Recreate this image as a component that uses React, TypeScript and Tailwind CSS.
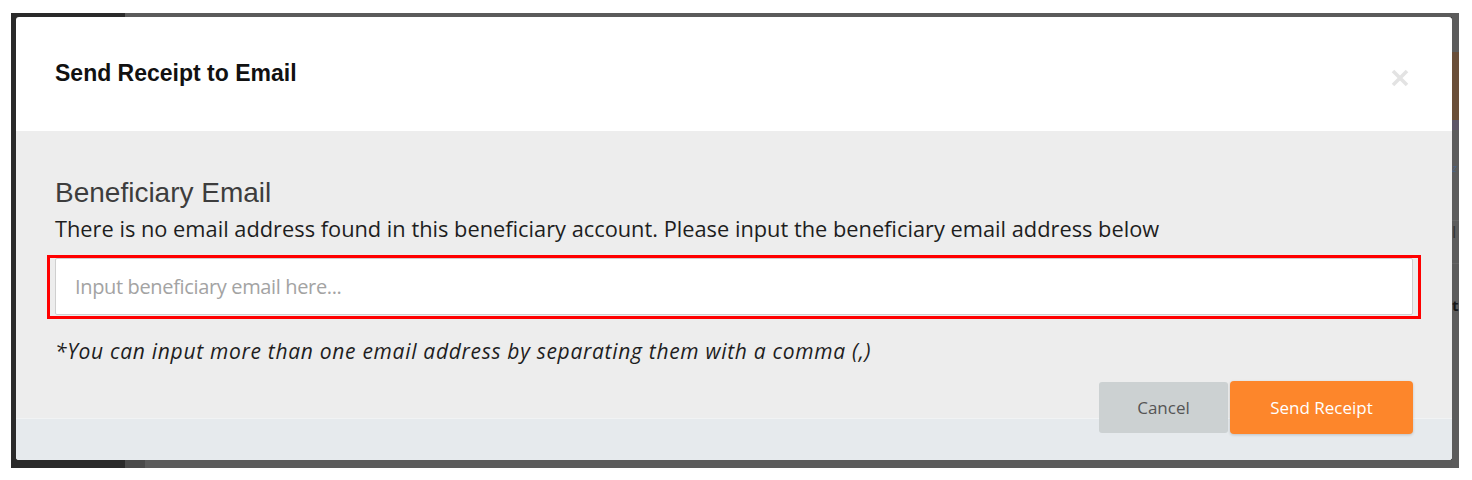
import type { ReactElement } from 'react';

// Send-receipt modal, photographed over a dimmed page (the dark frame round it).

function CloseIcon(): ReactElement {
  return (
    <svg width="18" height="18" viewBox="0 0 18 18" aria-hidden="true">
      <path d="M2 2 L16 16 M16 2 L2 16" stroke="#e3e3e3" strokeWidth="3.6" strokeLinecap="butt" />
    </svg>
  );
}

// The sliver of the page behind the backdrop that shows on the right of the modal.
function RightSliver(): ReactElement {
  return (
    <div className="flex w-[7px] shrink-0 flex-col overflow-hidden bg-[#5c5c5c]">
      <div className="h-[39px] shrink-0" />
      <div className="h-[68px] shrink-0 bg-[#6a4f39]" />
      <div className="h-[10px] shrink-0 bg-[#5d5667]" />
      <div className="h-[30px] shrink-0" />
      <div className="h-[16px] shrink-0 font-['Open_Sans'] text-[11px] leading-[16px] italic text-[#4b6384]">
        z
      </div>
      <div className="h-[44px] shrink-0" />
      <div className="h-px shrink-0 bg-[#666]" />
      <div className="h-[22px] shrink-0 font-['Open_Sans'] text-[17px] leading-[22px] text-[#333]">
        l
      </div>
      <div className="h-[20px] shrink-0" />
      <div className="h-px shrink-0 bg-[#666]" />
      <div className="h-[30px] shrink-0" />
      <div className="h-[22px] shrink-0 font-['Open_Sans'] text-[15px] font-bold leading-[22px] text-[#151515]">
        t
      </div>
    </div>
  );
}

export default function App(): ReactElement {
  return (
    <div className="h-[480px] w-[1472px] bg-white pt-[13px] pl-[11px]">
      <div className="flex h-[455px] w-[1448px] bg-[#2a2a2a]">
        <div className="w-[5px] shrink-0 bg-[#2a2a2a]" />
        <div className="flex w-[1436px] shrink-0 flex-col">
          <div className="h-[4px] shrink-0 bg-[linear-gradient(to_right,#2a2a2a_0_109px,#5b5b5b_109px)]" />
          <div className="flex h-[443px] shrink-0 flex-col overflow-hidden rounded-[3px] bg-white">
            <div className="flex h-[114px] shrink-0 items-start justify-between pt-[45px] pr-[43px] pl-[39px]">
              <h1 className="font-['Liberation_Sans',Arial,sans-serif] text-[23px] leading-[23px] font-bold text-[#111]">
                Send Receipt to Email
              </h1>
              <button type="button" aria-label="Close" className="mt-[7px] flex h-[18px] w-[18px]">
                <CloseIcon />
              </button>
            </div>

            <div className="flex flex-1 flex-col px-[39px] pt-[48px] bg-[linear-gradient(to_bottom,#ededed_0_287px,#f1f3f4_287px_288px,#e6eaed_288px)]">
              <h2 className="font-['Liberation_Sans',Arial,sans-serif] text-[28px] leading-[28px] text-[#3d3d3d]">
                Beneficiary Email
              </h2>
              <p className="mt-[9px] font-['Open_Sans',sans-serif] text-[21.8px] leading-[26px] text-[#1e1e1e]">
                There is no email address found in this beneficiary account. Please input the
                beneficiary email address below
              </p>

              <div className="-mx-[8px] mt-[13px] border-[3px] border-[#ff0000] px-[5px] pb-px">
                <input
                  type="text"
                  placeholder="Input beneficiary email here..."
                  className="h-[57px] w-full rounded-[2px] border border-[#cfcfcf] bg-white pl-[19px] font-['Open_Sans',sans-serif] text-[20px] tracking-[-0.35px] text-[#333] outline-none placeholder:text-[#a3a3a3]"
                />
              </div>

              <p className="mt-[20px] font-['Open_Sans',sans-serif] text-[21px] leading-[24px] tracking-[0.7px] italic text-[#1e1e1e]">
                *You can input more than one email address by separating them with a comma (,)
              </p>

              <div className="mt-[18px] flex items-center justify-end gap-[2px]">
                <button
                  type="button"
                  className="h-[51px] w-[129px] rounded-[3px] bg-[#ccd1d2] font-['Open_Sans',sans-serif] text-[17px] text-[#555]"
                >
                  Cancel
                </button>
                <button
                  type="button"
                  className="h-[53px] w-[183px] rounded-[4px] bg-[#fd862b] font-['Open_Sans',sans-serif] text-[17px] text-white shadow-[0_1px_3px_rgba(0,0,0,0.18)]"
                >
                  Send Receipt
                </button>
              </div>
            </div>
          </div>
          <div className="h-[8px] shrink-0 bg-[linear-gradient(to_right,#2a2a2a_0_109px,#4a4a4a_109px_129px,#5b5b5b_129px)]" />
        </div>
        <RightSliver />
      </div>
    </div>
  );
}
